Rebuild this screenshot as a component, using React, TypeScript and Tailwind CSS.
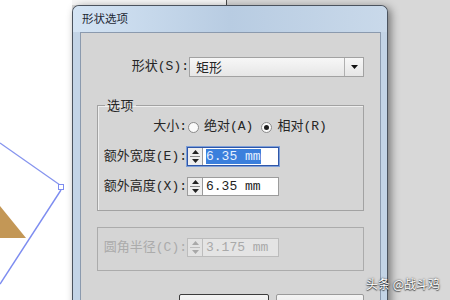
import type { ReactNode } from 'react';

const cjk = 'font-["Noto_Sans_CJK_SC",sans-serif]';
const mono = 'font-["Liberation_Mono","Noto_Sans_CJK_SC",monospace]';

function Spinner({ disabled }: { disabled?: boolean }) {
  const arrow = disabled ? '#a8a8a8' : '#222';
  return (
    <div
      className={`w-[15px] h-full flex flex-col border-r ${
        disabled ? 'border-[#bdbdbd] bg-[#e2e2e2]' : 'border-[#9a9a9a] bg-[#eeeeee]'
      }`}
    >
      <div className="flex-1 flex items-center justify-center">
        <svg width="7" height="4" viewBox="0 0 7 4">
          <path d="M0 4 L3.5 0 L7 4 Z" fill={arrow} />
        </svg>
      </div>
      <div className={`h-px mx-[2px] ${disabled ? 'bg-[#bdbdbd]' : 'bg-[#8a8a8a]'}`} />
      <div className="flex-1 flex items-center justify-center">
        <svg width="7" height="4" viewBox="0 0 7 4">
          <path d="M0 0 L3.5 4 L7 0 Z" fill={arrow} />
        </svg>
      </div>
    </div>
  );
}

function NumberField({ value, focused, disabled }: { value: string; focused?: boolean; disabled?: boolean }) {
  return (
    <div
      className={`w-[92px] h-[19px] flex items-stretch border ${
        focused
          ? 'border-[#2f56a8] outline outline-1 outline-[#7d9fd8]'
          : disabled
            ? 'border-[#bcbcbc] bg-[#e4e4e4]'
            : 'border-[#9c9c9c]'
      } ${disabled ? '' : 'bg-white'}`}
    >
      <Spinner disabled={disabled} />
      <div className={`flex-1 flex items-center pl-[3px] text-[13px] leading-none ${mono}`}>
        {focused ? (
          <span className="bg-[#3b7fdc] text-[#e6f0ff] h-[15px] flex items-center">{value}</span>
        ) : (
          <span className={disabled ? 'text-[#a9a9a9]' : 'text-[#222]'}>{value}</span>
        )}
      </div>
    </div>
  );
}

function FieldRow({ label, children, disabled }: { label: string; children: ReactNode; disabled?: boolean }) {
  return (
    <div className="flex items-center h-[19px]">
      <div
        className={`w-[82px] flex justify-end whitespace-nowrap text-[13px] leading-none ${mono} ${
          disabled ? 'text-[#ababab]' : 'text-[#262626]'
        }`}
      >
        {label}
      </div>
      {children}
    </div>
  );
}

function Radio({ checked }: { checked?: boolean }) {
  return (
    <div className="w-[11px] h-[11px] rounded-full border border-[#8a8a8a] bg-[#fafafa] flex items-center justify-center">
      {checked && <div className="w-[5px] h-[5px] rounded-full bg-[#1e1e1e]" />}
    </div>
  );
}

function CanvasArt() {
  return (
    <svg width="72" height="300" viewBox="0 0 72 300">
      <polygon points="0,206 26,238 0,238" fill="#c39756" />
      <line x1="0" y1="143" x2="60" y2="185" stroke="#8593ee" strokeWidth="1.2" />
      <line x1="61" y1="190" x2="0" y2="284" stroke="#7d8cf0" strokeWidth="1.4" />
      <rect x="58.5" y="184.5" width="5" height="5" fill="#fff" stroke="#7d8cf0" strokeWidth="1" />
    </svg>
  );
}

export default function App() {
  return (
    <div className="relative w-[450px] h-[300px] overflow-hidden flex bg-[#d8d8d8]">
      {/* artboard */}
      <div className="w-[72px] h-full bg-white shrink-0">
        <CanvasArt />
      </div>

      <div className="w-[316px] shrink-0 flex flex-col">
        <div className="h-[5px] flex shrink-0">
          <div className="w-[155px] bg-[#f6f6f6] border-r border-[#4a4a4a]" />
          <div className="flex-1 bg-[#d8d8d8]" />
        </div>

        {/* dialog */}
        <div className="flex-1 flex flex-col rounded-t-[7px] border border-b-0 border-[#4b535e] bg-[#c3d4e6] shadow-[3px_2px_9px_rgba(0,0,0,0.45)]">
          <div className="h-[26px] shrink-0 rounded-t-[6px] bg-linear-to-r from-[#d4e4f4] via-[#b8cce2] to-[#c9d9ea] flex items-center pl-[9px]">
            <span className={`text-[11.5px] text-[#1d2733] leading-none ${cjk}`}>形状选项</span>
          </div>

          <div className="flex-1 ml-[7px] mr-[6px] bg-[#d5d5d5] border border-b-0 border-[#8b9aae] px-[16px] pt-[24px] flex flex-col">
            {/* shape select */}
            <div className="flex items-center h-[20px]">
              <div className={`w-[92px] flex justify-end whitespace-nowrap text-[13px] text-[#262626] ${mono}`}>
                形状(S):
              </div>
              <div className="flex-1 h-[20px] flex border border-[#a2a2a2] bg-linear-to-b from-[#f7f7f7] to-[#e6e6e6]">
                <div className={`flex-1 flex items-center pl-[6px] text-[13px] text-[#262626] ${cjk}`}>矩形</div>
                <div className="w-[19px] border-l border-[#b0b0b0] flex items-center justify-center">
                  <svg width="7" height="4" viewBox="0 0 7 4">
                    <path d="M0 0 L3.5 4 L7 0 Z" fill="#111" />
                  </svg>
                </div>
              </div>
            </div>

            {/* options group */}
            <fieldset className="mt-[20px] border border-[#a2a2a2] pl-[7px] pb-[14px] shadow-[inset_1px_1px_0_#efefef]">
              <legend className={`px-[2px] text-[13px] leading-[16px] tracking-[0.5px] text-[#262626] ${cjk}`}>选项</legend>

              <div className="mt-[6px] h-[16px] flex items-center">
                <div className={`w-[82px] flex justify-end whitespace-nowrap text-[13px] text-[#262626] ${mono}`}>大小:</div>
                <div className="ml-[1px] flex items-center">
                  <Radio />
                  <span className={`ml-[5px] text-[13px] text-[#262626] ${mono}`}>绝对(A)</span>
                  <div className="ml-[8px]">
                    <Radio checked />
                  </div>
                  <span className={`ml-[5px] text-[13px] text-[#262626] ${mono}`}>相对(R)</span>
                </div>
              </div>

              <div className="mt-[12px]">
                <FieldRow label="额外宽度(E):">
                  <NumberField value="6.35 mm" focused />
                </FieldRow>
              </div>
              <div className="mt-[11px]">
                <FieldRow label="额外高度(X):">
                  <NumberField value="6.35 mm" />
                </FieldRow>
              </div>
            </fieldset>

            {/* corner radius group (disabled) */}
            <div className="mt-[16px] border border-[#ababab] pl-[7px] pt-[10px] pb-[13px]">
              <FieldRow label="圆角半径(C):" disabled>
                <NumberField value="3.175 mm" disabled />
              </FieldRow>
            </div>

            {/* buttons */}
            <div className="mt-[23px] flex justify-end gap-[7px]">
              <div className="w-[90px] h-[24px] border border-[#3c3c3c] rounded-[2px] bg-linear-to-b from-[#f4f4f4] to-[#e2e2e2]" />
              <div className="w-[88px] h-[24px] border border-[#9a9a9a] rounded-[2px] bg-linear-to-b from-[#f4f4f4] to-[#e2e2e2]" />
            </div>
          </div>
        </div>
      </div>

      <div className="flex-1" />

      {/* watermark */}
      <div
        className={`absolute right-[10px] top-[278px] text-[12px] text-white leading-none [text-shadow:0_0_2px_rgba(0,0,0,0.85),0_1px_1px_rgba(0,0,0,0.6)] ${cjk}`}
      >
        头条 @战斗鸡
      </div>
    </div>
  );
}
